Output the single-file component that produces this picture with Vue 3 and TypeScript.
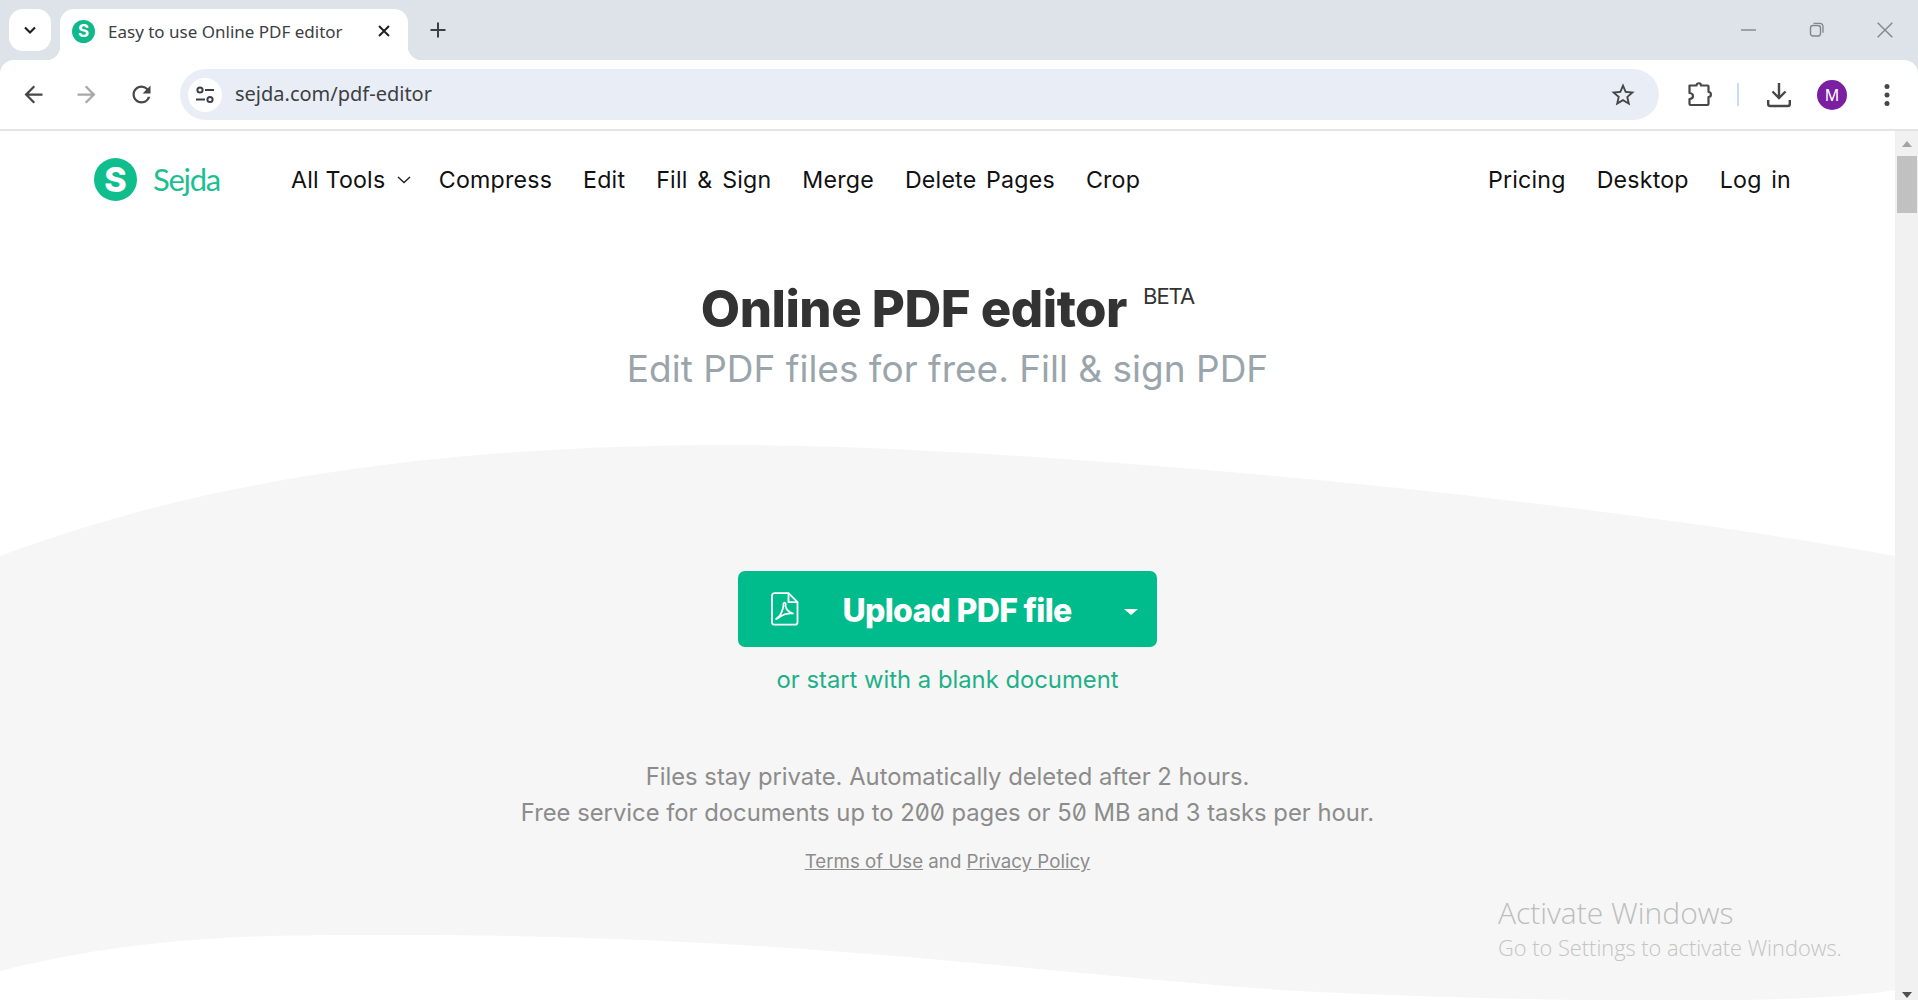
<script setup lang="ts">
const navLeft = ['Compress', 'Edit', 'Fill & Sign', 'Merge', 'Delete Pages', 'Crop']
const navRight = ['Pricing', 'Desktop', 'Log in']
</script>

<template>
  <div class="browser">
    <div class="tabstrip">
      <button class="tab-search">
        <svg width="16" height="16" viewBox="0 0 16 16"><path d="M3 5.5l5 5 5-5" fill="none" stroke="#202124" stroke-width="2.2" /></svg>
      </button>
      <div class="tab">
        <span class="favicon">S</span>
        <span class="tab-title">Easy to use Online PDF editor</span>
        <svg class="tab-close" width="14" height="14" viewBox="0 0 14 14"><path d="M2 2l10 10M12 2L2 12" stroke="#202124" stroke-width="2" /></svg>
      </div>
      <svg class="new-tab" width="18" height="18" viewBox="0 0 18 18"><path d="M9 1.5v15M1.5 9h15" stroke="#3c4043" stroke-width="2" /></svg>
      <div class="win-controls">
        <svg width="16" height="16" viewBox="0 0 16 16"><path d="M0 8h15" stroke="#80868b" stroke-width="1.4" /></svg>
        <svg width="16" height="16" viewBox="0 0 16 16"><rect x="1.5" y="3.5" width="10" height="10.5" rx="2.4" fill="none" stroke="#80868b" stroke-width="1.4" /><path d="M4.5 1.3h6.5a3 3 0 013 3v6.5" fill="none" stroke="#80868b" stroke-width="1.3" /></svg>
        <svg width="16" height="16" viewBox="0 0 16 16"><path d="M.7.7l14.6 14.6M15.300.7L.7 15.300" stroke="#80868b" stroke-width="1.4" /></svg>
      </div>
    </div>

    <div class="toolbar">
      <svg class="tb-icon back" width="27" height="27" viewBox="0 0 24 24"><path d="M20 11H7.830l5.590-5.590L12 4l-8 8 8 8 1.410-1.410L7.830 13H20v-2z" fill="#474747" /></svg>
      <svg class="tb-icon forward" width="27" height="27" viewBox="0 0 24 24"><path d="M4 11h12.170l-5.590-5.590L12 4l8 8-8 8-1.410-1.410L16.170 13H4v-2z" fill="#a8a8a8" /></svg>
      <svg class="tb-icon reload" width="27" height="27" viewBox="0 0 24 24"><path d="M17.650 6.350A7.958 7.958 0 0012 4c-4.420 0-7.990 3.580-7.990 8s3.570 8 7.990 8c3.730 0 6.840-2.550 7.730-6h-2.080A5.990 5.990 0 0112 18c-3.310 0-6-2.690-6-6s2.690-6 6-6c1.660 0 3.140.690 4.220 1.780L13 11h7V4l-2.350 2.350z" fill="#474747" /></svg>
      <div class="omnibox">
        <span class="site-icon">
          <svg width="20" height="18" viewBox="0 0 20 18">
            <circle cx="5" cy="4" r="2.600" fill="none" stroke="#3c4043" stroke-width="2" />
            <path d="M10 4h9M1 13.500h9" stroke="#3c4043" stroke-width="2" />
            <circle cx="15" cy="13.500" r="2.600" fill="none" stroke="#3c4043" stroke-width="2" />
          </svg>
        </span>
        <span class="url">sejda.com/pdf-editor</span>
        <svg class="star" width="28" height="28" viewBox="0 0 24 24"><path d="M22 9.240l-7.190-.620L12 2 9.190 8.630 2 9.240l5.460 4.730L5.820 21 12 17.270 18.180 21l-1.630-7.030L22 9.240zM12 15.400l-3.760 2.270 1-4.280-3.320-2.880 4.380-.380L12 6.100l1.710 4.040 4.380.380-3.320 2.880 1 4.280L12 15.400z" fill="#474747" /></svg>
      </div>
      <svg class="extension" width="26" height="26" viewBox="0 0 26 26">
        <path d="M2.500 3.500h7c0-3 4.500-3 4.500 0h6.500a1 1 0 011 1v5.500c3.200 0 3.200 5 0 5v7a1 1 0 01-1 1H3.500a1 1 0 01-1-1v-5c3-.2 3.500-1.500 3.500-3s-1-2.800-3.500-3V3.500z" fill="none" stroke="#474747" stroke-width="2.200" stroke-linejoin="round" />
      </svg>
      <span class="divider"></span>
      <svg class="download" width="24" height="26" viewBox="0 0 24 26">
        <path d="M12 1v15M5.500 9.500L12 16l6.500-6.500" fill="none" stroke="#474747" stroke-width="2.400" />
        <path d="M1.200 18v4a2 2 0 002 2h17.600a2 2 0 002-2v-4" fill="none" stroke="#474747" stroke-width="2.400" />
      </svg>
      <span class="avatar">M</span>
      <svg class="menu" width="6" height="24" viewBox="0 0 6 24">
        <circle cx="3" cy="3.500" r="2.500" fill="#474747" />
        <circle cx="3" cy="12" r="2.500" fill="#474747" />
        <circle cx="3" cy="20.500" r="2.500" fill="#474747" />
      </svg>
    </div>

    <div class="viewport">
      <div class="page">
        <header class="site-header">
          <div class="logo">
            <span class="logo-mark">S</span>
            <span class="logo-name">Sejda</span>
          </div>
          <nav class="nav">
            <a class="all-tools">
              All Tools
              <svg width="14" height="8" viewBox="0 0 14 8"><path d="M1 1l6 5.500L13 1" fill="none" stroke="#222" stroke-width="1.400" /></svg>
            </a>
            <a v-for="item in navLeft" :key="item">{{ item }}</a>
          </nav>
          <nav class="nav nav-right">
            <a v-for="item in navRight" :key="item">{{ item }}</a>
          </nav>
        </header>

        <section class="hero">
          <div class="title-row">
            <h1>Online PDF editor</h1>
            <sup>BETA</sup>
          </div>
          <p class="subtitle">Edit PDF files for free. Fill &amp; sign PDF</p>
        </section>

        <svg class="wave wave-top" viewBox="0 0 1895 111" preserveAspectRatio="none">
          <path d="M0 111C230 25 480 0 734 0 C1010 0 1560 50 1895 111Z" fill="#f6f6f6" />
        </svg>

        <section class="band">
          <button class="upload">
            <svg class="pdf-icon" width="28" height="34" viewBox="0 0 28 34">
              <path d="M3.500 1.200h14l9 9v20a2.500 2.500 0 01-2.500 2.500H3.500A2.500 2.500 0 011 30.200v-26.500a2.500 2.500 0 012.500-2.500z" fill="none" stroke="#fff" stroke-width="1.800" />
              <path d="M17.500 1.200v9h9" fill="none" stroke="#fff" stroke-width="1.800" />
              <path d="M5 27c3-1.500 6-6 7.500-13-.5-2 0-3.500 1-3.500s1.500 1.500 1 3.500c.500 3 3 6 7.500 7.500-3.500-.5-9 .5-12 2.500-2 1.500-4 3.500-5 3z" fill="none" stroke="#fff" stroke-width="1.700" stroke-linejoin="round" />
            </svg>
            <span class="upload-label">Upload PDF file</span>
            <span class="caret"></span>
          </button>
          <a class="blank-link">or start with a blank document</a>
          <p class="note">
            Files stay private. Automatically deleted after 2 hours.<br />
            Free service for documents up to 200 pages or 50 MB and 3 tasks per hour.
          </p>
          <p class="legal"><a>Terms of Use</a> and <a>Privacy Policy</a></p>
        </section>

        <svg class="wave wave-bottom" viewBox="0 0 1895 65" preserveAspectRatio="none">
          <path d="M0 36C150 -2 280 0 404 0 C800 0 1050 40 1297 56 C1500 66 1800 72 1895 55V65H0Z" fill="#fff" />
        </svg>

        <div class="activate">
          <div class="activate-title">Activate Windows</div>
          <div class="activate-sub">Go to Settings to activate Windows.</div>
        </div>
      </div>

      <div class="scrollbar">
        <span class="arrow-up"></span>
        <span class="thumb"></span>
        <span class="arrow-down"></span>
      </div>
    </div>
  </div>
</template>

<style scoped>
.browser {
  width: 1918px;
  height: 1000px;
  overflow: hidden;
  display: flex;
  flex-direction: column;
  background: #dee3e9;
  font-family: Inter, "Liberation Sans", sans-serif;
}

.tabstrip {
  height: 60px;
  flex: none;
  display: flex;
  align-items: flex-start;
  padding: 9px 0 0 9px;
  box-sizing: border-box;
}

.tab-search {
  width: 42px;
  height: 42px;
  border: 0;
  padding: 0;
  border-radius: 14px;
  background: #fff;
  display: flex;
  align-items: center;
  justify-content: center;
}

.tab {
  position: relative;
  width: 348px;
  height: 51px;
  margin-left: 9px;
  padding: 0 16px 7px 12px;
  box-sizing: border-box;
  background: #fff;
  border-radius: 14px 14px 0 0;
  display: flex;
  align-items: center;
}

.tab::before,
.tab::after {
  content: "";
  position: absolute;
  bottom: 0;
  width: 14px;
  height: 14px;
}

.tab::before {
  left: -14px;
  background: radial-gradient(circle at 0 0, transparent 14px, #fff 14.5px);
}

.tab::after {
  right: -14px;
  background: radial-gradient(circle at 100% 0, transparent 14px, #fff 14.5px);
}

.favicon {
  width: 23px;
  height: 23px;
  border-radius: 50%;
  background: #10b98a;
  color: #fff;
  font: 700 17px/23px Inter, sans-serif;
  text-align: center;
  flex: none;
}

.tab-title {
  margin-left: 13px;
  font: 17px "Noto Sans", sans-serif;
  color: #3c4043;
  white-space: nowrap;
  flex: 1;
}

.tab-close {
  flex: none;
  margin-right: 1px;
}

.new-tab {
  margin: 12px 0 0 21px;
}

.win-controls {
  margin-left: auto;
  margin-top: 13px;
  padding-right: 25px;
  display: flex;
  gap: 52px;
}

.toolbar {
  height: 71px;
  flex: none;
  box-sizing: border-box;
  background: #fff;
  border-bottom: 2px solid #e4e4e4;
  border-radius: 14px 14px 0 0;
  display: flex;
  align-items: center;
  padding-left: 20px;
}

.tb-icon {
  flex: none;
}

.forward {
  margin-left: 26px;
}

.reload {
  margin-left: 28px;
}

.omnibox {
  width: 1479px;
  height: 51px;
  margin-left: 25px;
  flex: none;
  border-radius: 26px;
  background: #e9eef6;
  display: flex;
  align-items: center;
  padding: 0 22px 0 8px;
  box-sizing: border-box;
}

.site-icon {
  width: 34px;
  height: 34px;
  border-radius: 50%;
  background: #fff;
  display: flex;
  align-items: center;
  justify-content: center;
}

.url {
  margin-left: 13px;
  padding-bottom: 2px;
  font: 20px "Noto Sans", sans-serif;
  color: #3c4043;
  flex: 1;
}

.extension {
  margin-left: 28px;
  flex: none;
}

.divider {
  width: 2px;
  height: 23px;
  margin-left: 24px;
  background: #c9dcf5;
  flex: none;
}

.download {
  margin-left: 28px;
  flex: none;
}

.avatar {
  width: 30px;
  height: 30px;
  margin-left: 26px;
  border-radius: 50%;
  background: #7b1fa2;
  color: #fff;
  font: 16px/30px "Noto Sans", sans-serif;
  text-align: center;
  flex: none;
}

.menu {
  margin-left: 37px;
  flex: none;
}

.viewport {
  flex: 1;
  min-height: 0;
  display: flex;
  background: #fff;
}

.page {
  position: relative;
  width: 1895px;
  flex: none;
}

.site-header {
  height: 96px;
  display: flex;
  align-items: center;
  padding: 0 104px 0 94px;
  box-sizing: border-box;
}

.logo {
  display: flex;
  align-items: center;
  width: 197px;
}

.logo-mark {
  width: 43px;
  height: 43px;
  border-radius: 50%;
  background: #10bd8d;
  color: #fff;
  font: 800 34px/43px Inter, sans-serif;
  text-align: center;
}

.logo-name {
  margin-left: 16px;
  font: 400 31px Lato, sans-serif;
  letter-spacing: -1.300px;
  color: #1dbf92;
}

.nav {
  display: flex;
  gap: 31px;
  margin-top: 2px;
  font-size: 23.200px;
  letter-spacing: 0.200px;
  word-spacing: 3px;
  color: #111;
  white-space: nowrap;
}

.nav-right {
  margin-left: auto;
}

.all-tools {
  display: flex;
  align-items: center;
  gap: 12px;
  margin-right: -3.600px;
  word-spacing: 0;
}

.hero {
  height: 218px;
  box-sizing: border-box;
  padding-top: 50px;
  text-align: center;
}

.title-row {
  display: flex;
  justify-content: center;
  align-items: flex-start;
}

h1 {
  margin: 0;
  font-size: 50.900px;
  line-height: 64px;
  font-weight: 800;
  color: #333;
  letter-spacing: -0.500px;
}

sup {
  margin: 7px 0 0 16px;
  font-size: 22px;
  line-height: 24px;
  letter-spacing: -1px;
  color: #333;
}

.subtitle {
  margin: 6px 0 0;
  font-size: 37px;
  line-height: 44px;
  color: #9aa5ab;
}

.wave {
  display: block;
  width: 1895px;
}

.wave-top {
  height: 111px;
}

.wave-bottom {
  height: 65px;
  background: #f6f6f6;
}

.band {
  height: 379px;
  box-sizing: border-box;
  padding-top: 15px;
  background: #f6f6f6;
  display: flex;
  flex-direction: column;
  align-items: center;
}

.upload {
  width: 419px;
  height: 76px;
  border: 0;
  border-radius: 7px;
  background: #00bb8b;
  color: #fff;
  display: flex;
  align-items: center;
  padding: 0 19px 0 33px;
  box-sizing: border-box;
}

.pdf-icon {
  flex: none;
}

.upload-label {
  flex: 1;
  margin-top: 2px;
  padding-right: 9px;
  font: 800 32px Inter, sans-serif;
  letter-spacing: -0.700px;
  text-align: center;
  white-space: nowrap;
}

.caret {
  flex: none;
  width: 0;
  height: 0;
  margin-top: 6px;
  border-left: 7px solid transparent;
  border-right: 7px solid transparent;
  border-top: 6px solid #fff;
}

.blank-link {
  margin-top: 18px;
  font-size: 23.800px;
  line-height: 30px;
  color: #1fb088;
}

.note {
  margin: 64px 0 0;
  font-size: 23.800px;
  line-height: 36px;
  color: #8c8c8c;
  text-align: center;
  font-feature-settings: "zero";
}

.legal {
  margin: 19px 0 0;
  font-size: 18.700px;
  line-height: 24px;
  color: #8c8c8c;
}

.legal a {
  text-decoration: underline;
}

.activate {
  position: absolute;
  left: 1498px;
  top: 762px;
  font-family: "Open Sans", sans-serif;
  font-weight: 300;
  color: #bdbdbd;
}

.activate-title {
  font-size: 30px;
  line-height: 40px;
}

.activate-sub {
  font-size: 21.800px;
  line-height: 30px;
  color: #c4c4c4;
}

.scrollbar {
  width: 23px;
  flex: none;
  background: #f1f1f1;
  display: flex;
  flex-direction: column;
  align-items: center;
}

.arrow-up {
  margin-top: 10px;
  border-left: 5.500px solid transparent;
  border-right: 5.500px solid transparent;
  border-bottom: 6px solid #a3a3a3;
}

.thumb {
  width: 20px;
  height: 57px;
  margin-top: 9px;
  background: #c1c1c1;
}

.arrow-down {
  margin-top: auto;
  margin-bottom: 2px;
  border-left: 5.500px solid transparent;
  border-right: 5.500px solid transparent;
  border-top: 6px solid #505050;
}
</style>

<style>
html,
body {
  margin: 0;
  overflow: hidden;
}
</style>
